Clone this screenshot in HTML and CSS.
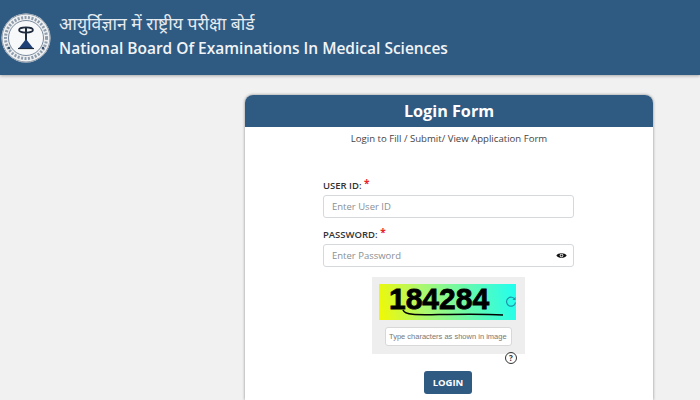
FILE: index.html
```html
<!DOCTYPE html>
<html lang="hi">
<head>
    <meta charset="UTF-8">
    <title>Login Form</title>
    <link rel="stylesheet" href="styles.css">
</head>
<body>
	<div class="top-bar">
		<svg class="logo" viewBox="0 0 50 50" width="50" height="50">
			<circle cx="25" cy="25" r="24.5" fill="#eef0f2"/>
			<circle cx="25" cy="25" r="24" fill="none" stroke="#8d9aa8" stroke-width="1"/>
			<circle cx="25" cy="25" r="20.500" fill="none" stroke="#8f9cab" stroke-width="3" stroke-dasharray="2 1.5"/>
			<circle cx="25" cy="25" r="17.500" fill="#f7f8f9" stroke="#5b6f86" stroke-width="0.8"/>
			<ellipse cx="25" cy="17" rx="7" ry="2.6" fill="none" stroke="#1d2a3c" stroke-width="1.6"/>
			<path d="M25 14V31" stroke="#1d2a3c" stroke-width="2"/>
			<path d="M18 35L25 26L32 35Z" fill="#1f3f77"/>
			<path d="M17 35.500H33" stroke="#1d2a3c" stroke-width="1.2"/>
			<circle cx="8" cy="35" r="1.3" fill="#39506b"/>
			<circle cx="42" cy="35" r="1.3" fill="#39506b"/>
		</svg>
		<div class="org-name">
			<div class="org-hindi">आयुर्विज्ञान में राष्ट्रीय परीक्षा बोर्ड</div>
			<div class="org-english">National Board Of Examinations In Medical Sciences</div>
		</div>
	</div>

	<div class="card">
		<h1 class="card-header">Login Form</h1>
		<p class="card-sub">Login to Fill / Submit/ View Application Form</p>

		<form class="login-form">
			<label class="field-label">USER ID: <span class="req">*</span></label>
			<div class="input-box"><span class="placeholder">Enter User ID</span></div>

			<label class="field-label">PASSWORD: <span class="req">*</span></label>
			<div class="input-box">
				<span class="placeholder">Enter Password</span>
				<svg viewBox="0 0 16 16" width="11" height="11">
					<path d="M0.5 8C3 3.5 13 3.5 15.500 8C13 12.500 3 12.500 0.5 8Z" fill="#111"/>
					<circle cx="8" cy="8" r="2.6" fill="#fff"/>
					<circle cx="8" cy="8" r="1.500" fill="#111"/>
				</svg>
			</div>

			<div class="captcha-wrap">
				<div class="captcha-box">
					<div class="captcha-row">
						<div class="captcha-img">
							<span class="captcha-text">184284</span>
							<svg class="captcha-line" viewBox="0 0 116 10" width="116" height="10">
								<path d="M14 2C16 7 26 7 50 6.500S100 6 114 7" fill="none" stroke="#000" stroke-width="1.500"/>
							</svg>
						</div>
						<svg class="refresh" viewBox="0 0 12 12" width="12" height="12">
							<path d="M10 3.500A4.500 4.500 0 1 0 10.500 6.500" fill="none" stroke="#1f93a8" stroke-width="1.200"/>
							<path d="M10.500 1V4H7.500Z" fill="#1f93a8"/>
						</svg>
					</div>
					<div class="captcha-input">Type characters as shown in image</div>
				</div>
				<div class="help-row"><span class="help">?</span></div>
			</div>

			<button type="button" class="login-btn">LOGIN</button>
		</form>
	</div>
</body>
</html>
```

FILE: styles.css
```css
html, body {
	height: 400px;
	overflow: hidden;
}

body {
	margin: 0;
	background-color: #f1f1f1;
	font-family: "Open Sans", "Noto Sans", sans-serif;
	color: #333;
}

.top-bar {
	height: 75px;
	box-sizing: border-box;
	background-color: #2f5a82;
	display: flex;
	align-items: center;
	gap: 8px;
	padding: 0 0 0 1px;
	margin-bottom: 20px;
	box-shadow: 0 1px 3px rgba(0, 0, 0, 0.3);
}

.logo {
	flex: none;
}

.org-name {
	margin-top: -6px;
}

.org-hindi {
	color: #e6ebf0;
	font-family: "Noto Sans", "Lohit Devanagari", "DejaVu Sans", sans-serif;
	font-size: 17.500px;
	line-height: 26px;
}

.org-english {
	color: #f1f4f7;
	font-size: 15.500px;
	font-weight: 600;
	line-height: 24px;
	white-space: nowrap;
}

.card {
	width: 408px;
	height: 305px;
	margin-left: 245px;
	background-color: #fff;
	border-radius: 8px 8px 0 0;
	box-shadow: 0 0 3px rgba(0, 0, 0, 0.45);
}

.card-header {
	margin: 0;
	height: 32px;
	background-color: #2f5a82;
	border-radius: 8px 8px 0 0;
	color: #fff;
	font-size: 16.200px;
	font-weight: 700;
	line-height: 32px;
	text-align: center;
}

.card-sub {
	margin: 0;
	padding-top: 4px;
	font-size: 9.600px;
	line-height: 15px;
	text-align: center;
	color: #444;
}

.login-form {
	width: 251px;
	margin: 32px 0 0 78px;
	display: flex;
	flex-direction: column;
}

.field-label {
	font-size: 9.500px;
	font-weight: 600;
	line-height: 15px;
	color: #333;
	margin-bottom: 2px;
}

.req {
	color: #e8232a;
	font-size: 10px;
	font-weight: 700;
	line-height: 0;
	vertical-align: 2px;
}

.input-box {
	height: 23px;
	box-sizing: border-box;
	margin-bottom: 9px;
	padding: 0 6px 0 8px;
	background-color: #fff;
	border: 1px solid #d6d9dc;
	border-radius: 3px;
	display: flex;
	align-items: center;
	justify-content: space-between;
}

.placeholder {
	font-size: 9.500px;
	color: #8a8f94;
}

.captcha-wrap {
	width: 153px;
	margin: 1px 0 0 49px;
	display: flex;
	flex-direction: column;
}

.captcha-box {
	height: 77px;
	box-sizing: border-box;
	padding: 7px 7px 0;
	background-color: #eeeeef;
}

.captcha-row {
	display: flex;
	align-items: center;
}

.captcha-img {
	position: relative;
	flex: none;
	width: 137px;
	height: 36px;
	background: linear-gradient(80deg, #f2f900 0%, #aff86c 32%, #66f9ae 65%, #1ffff0 100%);
}

.captcha-text {
	display: block;
	padding-left: 10px;
	font-family: "Liberation Sans", sans-serif;
	font-size: 30px;
	font-weight: 700;
	line-height: 30px;
	color: #000;
	-webkit-text-stroke: 0.8px #000;
}

.captcha-line {
	position: absolute;
	left: 10px;
	top: 24px;
}

.refresh {
	flex: none;
	margin-left: -11px;
	position: relative;
}

.captcha-input {
	height: 19px;
	box-sizing: border-box;
	margin: 7px 6px 0 6px;
	background-color: #fff;
	border: 1px solid #d8d8da;
	border-radius: 3px;
	font-family: "Liberation Sans", sans-serif;
	font-size: 7.500px;
	line-height: 17px;
	padding-left: 3px;
	color: #777;
	white-space: nowrap;
}

.help-row {
	display: flex;
	justify-content: flex-end;
	padding-right: 8px;
	margin-top: -2px;
}

.help {
	width: 10px;
	height: 10px;
	border: 1px solid #333;
	border-radius: 50%;
	font-size: 8px;
	font-weight: 700;
	line-height: 10px;
	text-align: center;
	color: #333;
}

.login-btn {
	width: 48px;
	height: 23px;
	margin: 7px 0 0 101px;
	padding: 0;
	background-color: #2f5a82;
	border: none;
	border-radius: 3px;
	color: #fff;
	font-family: "Open Sans", sans-serif;
	font-size: 9.500px;
	font-weight: 700;
}
```
